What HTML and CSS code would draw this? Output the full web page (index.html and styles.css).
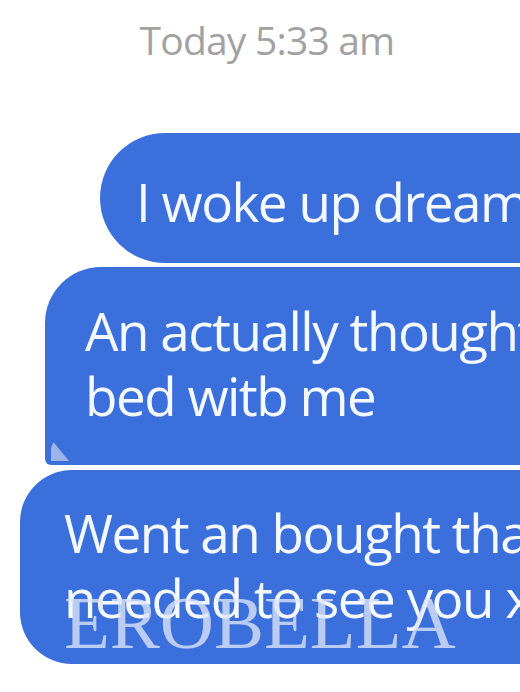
FILE: index.html
```html
<!DOCTYPE html>
<html>
<head>
<meta charset="utf-8">
<link rel="stylesheet" href="styles.css">
</head>
<body>
<div class="page">
  <div class="time">Today 5:33 am</div>
  <div class="thread">
    <div class="bubble b1"><span class="line">I woke up dreaming about you</span></div>
    <div class="bubble b2"><span class="line">An actually thought you were in</span><span class="line">bed witb me</span></div>
    <div class="bubble b3"><span class="line">Went an bought that dress</span><span class="line">needed to see you x</span><span class="mark">EROBELLA</span></div>
  </div>
</div>
</body>
</html>
```
FILE: styles.css
```css
html, body {
  margin: 0;
  padding: 0;
  background: #ffffff;
}
body {
  width: 520px;
  height: 692px;
  overflow: hidden;
}
.page {
  display: flex;
  flex-direction: column;
  width: 520px;
  height: 692px;
  overflow: hidden;
}
.time {
  font-family: "Open Sans", "Noto Sans", sans-serif;
  font-size: 39px;
  line-height: 50px;
  letter-spacing: -0.8px;
  color: #a2a2a2;
  text-align: center;
  padding: 15px 0 0 14px;
  height: 50px;
}
.thread {
  display: flex;
  flex-direction: column;
  margin-top: 68px;
}
.bubble {
  position: relative;
  background: #3b6fdb;
  color: #f4f8ff;
  font-family: "Open Sans", "Noto Sans", sans-serif;
  font-size: 53px;
  line-height: 65px;
  letter-spacing: -1.5px;
  white-space: nowrap;
  display: flex;
  flex-direction: column;
  box-sizing: border-box;
  width: 600px;
}
.line {
  display: block;
  height: 65px;
}
.b1 {
  margin-left: 100px;
  height: 130px;
  padding: 36px 0 0 36px;
  border-radius: 65px 0 0 65px;
}
.b2 {
  margin-top: 4px;
  margin-left: 45px;
  height: 198px;
  padding: 31px 0 0 40px;
  border-radius: 56px 0 0 6px;
}
.b2::after {
  content: "";
  position: absolute;
  left: 6px;
  bottom: 4px;
  width: 18px;
  height: 22px;
  background: #c7d2ee;
  border-radius: 10px 0 0 0;
  clip-path: polygon(0 0, 100% 100%, 0 100%);
  opacity: 0.7;
}
.b3 {
  margin-top: 5px;
  margin-left: 20px;
  height: 194px;
  padding: 30px 0 0 44px;
  border-radius: 52px 0 0 52px;
}
.mark {
  position: absolute;
  left: 44px;
  top: 115px;
  font-family: "Liberation Serif", "Times New Roman", serif;
  font-size: 75px;
  line-height: 75px;
  letter-spacing: 0;
  color: rgba(220, 228, 250, 0.8);
}
```
